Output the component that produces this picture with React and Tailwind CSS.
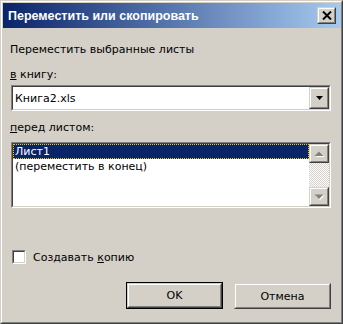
import React from "react";

const font = { fontFamily: '"DejaVu Sans", Tahoma, sans-serif' };

function Raised({ className = "", children }) {
  return (
    <div
      className={
        "border border-t-[#d4d0c8] border-l-[#d4d0c8] border-r-[#404040] border-b-[#404040] bg-[#d4d0c8] " +
        className
      }
    >
      <div className="w-full h-full border border-t-white border-l-white border-r-[#808080] border-b-[#808080] flex items-center justify-center">
        {children}
      </div>
    </div>
  );
}

function Sunken({ className = "", children }) {
  return (
    <div
      className={
        "border border-t-[#808080] border-l-[#808080] border-r-white border-b-white " +
        className
      }
    >
      <div className="w-full h-full border border-t-[#404040] border-l-[#404040] border-r-[#d4d0c8] border-b-[#d4d0c8] bg-white flex">
        {children}
      </div>
    </div>
  );
}

export default function App() {
  return (
    <div
      className="w-[343px] h-[324px] bg-[#d4d0c8] border border-t-[#d4d0c8] border-l-[#d4d0c8] border-r-[#404040] border-b-[#404040] text-[11px] leading-[13px] text-black"
      style={font}
    >
      <div className="w-full h-full border border-t-white border-l-white border-r-[#808080] border-b-[#808080] pl-px pt-px">
        {/* Title bar */}
        <div className="h-[25px] bg-[linear-gradient(to_right,#0a246a,#a6caf0)] flex items-center justify-between pl-[5px] pr-[5px]">
          <span className="text-white font-bold text-[12.5px] leading-[15px] mt-[1px] font-['Liberation_Sans',sans-serif]">
            Переместить или скопировать
          </span>
          <Raised className="w-[19px] h-[17px]">
            <svg width="10" height="9" viewBox="0 0 10 9">
              <path d="M1 0.5 L9 8.5 M9 0.5 L1 8.5" stroke="black" strokeWidth="2" />
            </svg>
          </Raised>
        </div>

        <div className="pl-[8px] pr-[8px]">
          <div className="mt-[15px] -ml-px">Переместить выбранные листы</div>
          <div className="mt-[12px] -ml-px">
            <span className="underline">в</span> книгу:
          </div>
          <Sunken className="mt-[4px] h-[26px] w-[320px]">
            <div className="flex-1 flex items-center pl-[2px]">Книга2.xls</div>
            <Raised className="w-[20px] h-full">
              <svg width="7" height="4" viewBox="0 0 7 4">
                <path d="M0 0 H7 L3.5 4 Z" fill="black" />
              </svg>
            </Raised>
          </Sunken>

          <div className="mt-[10px] -ml-px">
            <span className="underline">п</span>еред листом:
          </div>
          <Sunken className="mt-[8px] h-[66px] w-[320px]">
            <div className="flex-1 flex flex-col pt-0">
              <div className="h-[15px] bg-[#0a246a] text-white flex items-center pl-[2px] outline outline-1 outline-dotted outline-[#d8c860] -outline-offset-1">
                Лист1
              </div>
              <div className="h-[15px] flex items-center pl-[2px]">(переместить в конец)</div>
            </div>
            <div className="w-[20px] h-full flex flex-col">
              <Raised className="w-[20px] h-[19px]">
                <svg width="11" height="6" viewBox="0 0 11 6">
                  <path d="M1.5 6 H10.5 L6 1.5 Z" fill="white" />
                  <path d="M0.5 5 H9.5 L5 0.5 Z" fill="#808080" />
                </svg>
              </Raised>
              <div className="flex-1 bg-[repeating-conic-gradient(#ffffff_0_25%,#d4d0c8_0_50%)] bg-[length:2px_2px]" />
              <Raised className="w-[20px] h-[19px]">
                <svg width="11" height="6" viewBox="0 0 11 6">
                  <path d="M1.5 1.5 H10.5 L6 6 Z" fill="white" />
                  <path d="M0.5 0.5 H9.5 L5 5 Z" fill="#808080" />
                </svg>
              </Raised>
            </div>
          </Sunken>

          <div className="mt-[42px] flex items-center">
            <Sunken className="w-[14px] h-[14px] ml-px" />
            <span className="ml-[7px]">
              Создавать <span className="underline">к</span>опию
            </span>
          </div>

          <div className="mt-[18px] flex justify-end gap-[11px] pr-0 w-[320px]">
            <div className="border border-black w-[97px] h-[27px]">
              <Raised className="w-full h-full">OK</Raised>
            </div>
            <Raised className="w-[97px] h-[26px] mt-px">Отмена</Raised>
          </div>
        </div>
      </div>
    </div>
  );
}
